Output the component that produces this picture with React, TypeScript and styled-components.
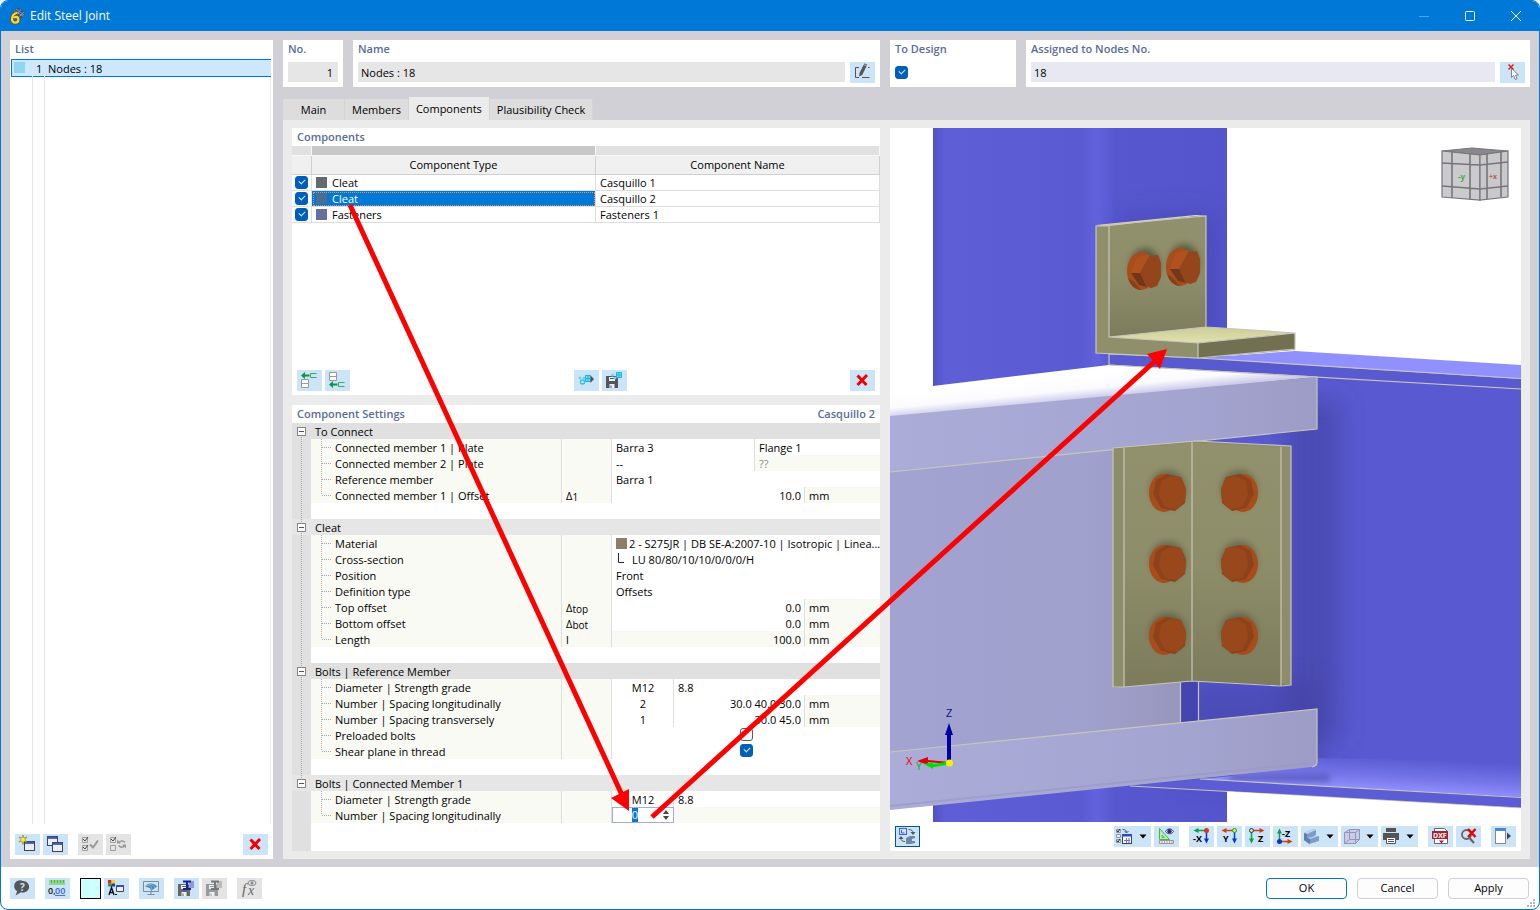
import React, { useEffect, useRef, useState } from "react";
import styled, { createGlobalStyle, css } from "styled-components";

const font = `"Open Sans", "Noto Sans", "Liberation Sans", sans-serif`;

const color = {
  accent: "#0078d7",
  frame: "#d1d0d6",
  page: "#ebebeb",
  heading: "#5b6c95",
  button: "#cce4f7",
  disabled: "#e4e4e4",
  field: "#e6e6e6",
  tint: "#f9faf4",
  group: "#e0e0e0",
  rule: "#dedede",
  check: "#005fb8",
};

const GlobalStyle = createGlobalStyle`
  *, *::before, *::after { box-sizing: border-box; }
  body { margin: 0; background: #f1f3f6; font-family: ${font}; font-size: 11px; line-height: 16px; color: #000; }
  button, input { font: inherit; color: inherit; }
  svg text { font-family: ${font}; }
`;

/* ---------- window frame ---------- */

const Window = styled.div`
  position: relative;
  display: flex;
  flex-direction: column;
  min-height: 100vh;
  border: 1px solid ${color.accent};
  border-radius: 8px;
  background: #fff;
  overflow: hidden;
`;

const TitleBar = styled.header`
  display: flex;
  align-items: center;
  height: 30px;
  padding-left: 8px;
  background: ${color.accent};
  color: #fff;
`;

const Title = styled.h1`
  flex: 1;
  margin: 0 0 0 5px;
  font-size: 12px;
  font-weight: 400;
`;

const CaptionButton = styled.button`
  display: flex;
  align-items: center;
  justify-content: center;
  width: 46px;
  height: 30px;
  padding: 0;
  border: 0;
  background: transparent;
  color: #fff;
  &:disabled { color: #4aa3ea; }
`;

const Workspace = styled.main`
  flex: 1;
  display: grid;
  grid-template-columns: 263px minmax(0, 1fr);
  gap: 10px;
  padding: 9px 9px 8px;
  background: ${color.frame};
`;

const Footer = styled.footer`
  display: flex;
  align-items: center;
  gap: 10px;
  height: 42px;
  padding: 0 10px 0 9px;
`;

/* ---------- shared parts ---------- */

const Panel = styled.section`
  display: flex;
  flex-direction: column;
  min-width: 0;
  background: #fff;
`;

const PanelHead = styled.div`
  display: flex;
  justify-content: space-between;
  padding: 0 5px;
  color: ${color.heading};
  font-weight: 600;
  line-height: 18px;
`;

const Heading = styled.h2`
  margin: 0;
  font-size: 11px;
  font-weight: 600;
`;

const FieldLabel = styled.label`
  color: ${color.heading};
  font-weight: 600;
  line-height: 18px;
`;

const FieldPanel = styled(Panel)`
  padding: 0 5px 4px;
`;

const FieldLine = styled.div`
  display: flex;
  align-items: flex-start;
  gap: 5px;
  margin-top: 4px;
  height: 21px;
`;

const TextField = styled.input<{ $tone?: string; $right?: boolean }>`
  flex: 1;
  min-width: 0;
  height: 20px;
  padding: 0 5px 0 3px;
  border: 0;
  outline: 0;
  background: ${(p) => p.$tone ?? color.field};
  text-align: ${(p) => (p.$right ? "right" : "left")};
`;

const ToolButton = styled.button<{ $split?: boolean; $active?: boolean }>`
  display: flex;
  flex: none;
  align-items: center;
  width: ${(p) => (p.$split ? 37 : 25)}px;
  height: 21px;
  padding: 0;
  border: 0;
  background: ${color.button};
  box-shadow: ${(p) => (p.$active ? "inset 0 0 0 1px #005499" : "none")};
  &:disabled { background: ${color.disabled}; }
`;

const Swatch = styled.button`
  width: 21px;
  height: 21px;
  margin-right: -7px;
  padding: 0;
  border: 1px solid #000;
  background: #ccffff;
`;

const ToolGroup = styled.div`
  display: flex;
  gap: 3px;
`;

const ToolRow = styled.div`
  display: flex;
  justify-content: space-between;
  gap: 10px;
  padding: 4px 5px;
`;

const Spacer = styled.div`
  flex: 1;
`;

const CheckBox = styled.input.attrs({ type: "checkbox" })`
  appearance: none;
  position: relative;
  display: block;
  flex: none;
  width: 13px;
  height: 13px;
  margin: 0;
  border: 1px solid #5a5a5a;
  border-radius: 3px;
  background: #f6f6f6;
  &:checked { border-color: ${color.check}; background: ${color.check}; }
  &:checked::after {
    content: "";
    position: absolute;
    left: 3px;
    top: 2px;
    width: 6px;
    height: 4px;
    border: solid #d8e8f8;
    border-width: 0 0 1px 1px;
    transform: rotate(-45deg);
  }
`;

const DialogButton = styled.button<{ $primary?: boolean }>`
  width: 81px;
  height: 21px;
  padding: 0;
  border: 1px solid ${(p) => (p.$primary ? color.accent : "#d0d0d0")};
  border-radius: 4px;
  background: #fdfdfd;
`;

const Col = styled.col<{ $width?: number }>`
  width: ${(p) => (p.$width ? `${p.$width}px` : "auto")};
`;

/* ---------- list ---------- */

const NodeList = styled.ul`
  flex: 1;
  display: grid;
  grid-template-rows: 18px 1fr;
  margin: 1px 2px 6px 1px;
  padding: 0;
  list-style: none;
`;

const NodeRow = styled.li<{ $selected?: boolean }>`
  display: grid;
  grid-template-columns: 21px 12px 1fr;
  ${(p) =>
    p.$selected
      ? css`
          background: #cce8ff;
          border: solid ${color.accent};
          border-width: 1px 0 1px 1px;
        `
      : css`
          border-left: 1px solid transparent;
          border-right: 1px solid #ebebeb;
        `}
`;

const NodeCell = styled.span<{ $edge?: boolean }>`
  padding-left: 3px;
  border-right: ${(p) => (p.$edge ? "1px solid #e4e4e4" : "0")};
  line-height: 18px;
`;

const ColorChip = styled.span<{ $fill: string; $gap?: number }>`
  display: inline-block;
  width: 11px;
  height: 11px;
  margin-right: ${(p) => p.$gap ?? 5}px;
  background: ${(p) => p.$fill};
  vertical-align: -1px;
`;

const RowChip = styled.i`
  display: block;
  width: 11px;
  height: 11px;
  margin: 2px 0 0 -1px;
  background: #8fd6f5;
`;

/* ---------- editor ---------- */

const Editor = styled.div`
  display: flex;
  flex-direction: column;
  min-width: 0;
`;

const FieldRow = styled.div`
  display: grid;
  grid-template-columns: minmax(0, 597fr) minmax(0, 640fr);
  gap: 10px;
`;

const FieldPair = styled.div<{ $first: number }>`
  display: grid;
  grid-template-columns: ${(p) => p.$first}px minmax(0, 1fr);
  gap: 10px;
`;

const TabList = styled.div`
  display: flex;
  align-items: flex-end;
  height: 23px;
  margin-top: 10px;
`;

const Tab = styled.button<{ $active?: boolean }>`
  min-width: 62px;
  height: ${(p) => (p.$active ? 23 : 21)}px;
  padding: 0 7px;
  border: 0;
  border-right: 1px solid #d4d4d4;
  background: ${(p) => (p.$active ? color.page : "#dddddd")};
  white-space: nowrap;
`;

const TabPage = styled.div`
  flex: 1;
  display: grid;
  grid-template-columns: minmax(0, 588fr) minmax(0, 631fr);
  gap: 10px;
  padding: 8px 9px;
  background: ${color.page};
`;

const Column = styled.div`
  display: flex;
  flex-direction: column;
  gap: 10px;
  min-width: 0;
`;

const ComponentsPanel = styled(Panel)`
  height: 267px;
`;

const SettingsPanel = styled(Panel)`
  flex: 1;
`;

const ComponentTable = styled.table`
  width: 100%;
  table-layout: fixed;
  border-collapse: separate;
  border-spacing: 0;
  td, th { padding: 0; font-weight: 400; }
`;

const StripCell = styled.td<{ $strong?: boolean }>`
  height: 10px;
  border-right: 1px solid #f7f7f7;
  border-bottom: 1px solid #f7f7f7;
  background: ${(p) => (p.$strong ? "#c8c8c8" : "#e1e1e1")};
`;

const HeadCell = styled.th`
  height: 19px;
  border-right: 1px solid #d0d0d0;
  border-bottom: 1px solid #d0d0d0;
  background: #f0f0f0;
`;

const BodyCell = styled.td<{ $selected?: boolean }>`
  height: 16px;
  border-right: 1px solid ${color.rule};
  border-bottom: 1px solid ${color.rule};
  line-height: 15px;
  ${(p) =>
    p.$selected &&
    css`
      background: ${color.accent};
      color: #fff;
      outline: 1px dotted #e8954a;
      outline-offset: -2px;
    `}
`;

const CellText = styled.div`
  padding-left: 4px;
`;

const CheckHolder = styled.div`
  padding-left: 3px;
`;

/* ---------- property grid ---------- */

const dots = (angle: string) =>
  `repeating-linear-gradient(${angle}, #a8a8a8 0 1px, transparent 1px 2px)`;

const PropertyTable = styled.table`
  width: 100%;
  table-layout: fixed;
  border-collapse: separate;
  border-spacing: 0;
  th, td {
    position: relative;
    height: 16px;
    padding: 2px 4px 0;
    font-weight: 400;
    text-align: left;
    line-height: 14px;
    white-space: nowrap;
    overflow: hidden;
  }
`;

const Gutter = styled.td<{ $line?: "all" | "top" | "bottom" | "none"; $light?: boolean }>`
  background: ${(p) => (p.$light ? "#e6e6e6" : color.group)};
  &::before {
    content: "";
    display: ${(p) => (p.$line === "none" ? "none" : "block")};
    position: absolute;
    left: 9px;
    top: ${(p) => (p.$line === "bottom" ? 8 : 0)}px;
    bottom: ${(p) => (p.$line === "top" ? 8 : 0)}px;
    width: 1px;
    background: ${dots("180deg")};
  }
`;

const Toggle = styled.button`
  position: absolute;
  left: 5px;
  top: 4px;
  width: 9px;
  height: 9px;
  padding: 0;
  border: 1px solid #848484;
  background: #fff;
  &::before {
    content: "";
    display: block;
    height: 1px;
    margin: 0 1px;
    background: #555;
  }
`;

const GroupCell = styled.th<{ $light?: boolean }>`
  background: ${(p) => (p.$light ? "#e6e6e6" : color.group)};
`;

const NameCell = styled.th<{ $last?: boolean }>`
  && { padding-left: 24px; }
  border-right: 1px solid ${color.rule};
  background: ${color.tint};
  &::before {
    content: "";
    position: absolute;
    left: 10px;
    top: 0;
    bottom: ${(p) => (p.$last ? 8 : 0)}px;
    width: 1px;
    background: ${dots("180deg")};
  }
  &::after {
    content: "";
    position: absolute;
    left: 11px;
    top: 8px;
    width: 10px;
    height: 1px;
    background: ${dots("90deg")};
  }
`;

const SymbolCell = styled.td`
  border-right: 1px solid ${color.rule};
  background: ${color.tint};
  sub { font-size: 10px; line-height: 8px; vertical-align: -1px; }
`;

const ValueCell = styled.td<{ $align?: string; $tint?: boolean; $edge?: boolean; $muted?: boolean }>`
  && { text-align: ${(p) => p.$align ?? "left"}; }
  && { padding-right: ${(p) => (p.$align ? 3 : 0)}px; }
  border-right: ${(p) => (p.$edge ? `1px solid ${color.rule}` : "0")};
  background: ${(p) => (p.$tint ? color.tint : "#fff")};
  color: ${(p) => (p.$muted ? "#8c8c8c" : "#000")};
`;

const FlagCell = styled.td`
  && { padding: 1px 0 0; vertical-align: top; }
`;

const CheckCenter = styled.div`
  display: flex;
  justify-content: center;
`;

const EditCell = styled.td`
  && { padding: 0; }
`;

const Spinner = styled.div`
  display: flex;
  align-items: center;
  height: 16px;
  padding-right: 4px;
  border: 1px solid #a6a6e8;
  background: #fff;
`;

const SpinnerInput = styled.input`
  flex: 1;
  width: 100%;
  min-width: 0;
  height: 14px;
  padding: 0 6px 0 0;
  border: 0;
  outline: 0;
  background: transparent;
  text-align: center;
  line-height: 14px;
  &::selection { background: ${color.accent}; color: #fff; }
`;

const SpinnerKeys = styled.div`
  display: grid;
  gap: 2px;
`;

const SpinnerKey = styled.button<{ $down?: boolean }>`
  width: 6px;
  height: 4px;
  padding: 0;
  border: 0;
  background: #444;
  clip-path: ${(p) =>
    p.$down ? "polygon(0 0, 100% 0, 50% 100%)" : "polygon(50% 0, 100% 100%, 0 100%)"};
`;

const GridFiller = styled.div`
  flex: 1;
  border-left: 19px solid ${color.group};
`;

/* ---------- viewer ---------- */

const Viewer = styled(Panel)`
  min-height: 723px;
`;

const ViewerToolGroups = styled.div`
  display: flex;
  gap: 10px;
`;

const Scene = styled.svg`
  display: block;
  flex: 1;
  width: 100%;
  min-height: 0;
`;

const Callouts = styled.svg`
  position: absolute;
  left: 0;
  top: 0;
  width: 1538px;
  height: 908px;
  pointer-events: none;
`;

const SizeGrip = styled.svg`
  position: absolute;
  right: 3px;
  bottom: 1px;
`;

/* ---------- icons, drawn on the 25 x 21 button face ---------- */

const Icon = ({ children }: { children: React.ReactNode }) => (
  <svg width="25" height="21" viewBox="0 0 25 21" aria-hidden="true">
    {children}
  </svg>
);

const Chevron = () => (
  <svg width="8" height="5" viewBox="0 0 8 5" aria-hidden="true">
    <path d="M0.5 0.5h7L4 4.5z" fill="#000" />
  </svg>
);

const AppIcon = () => (
  <svg width="16" height="18" viewBox="0 0 16 18" aria-hidden="true">
    <path d="M4 5 8 1l5 1 3 5-2 2-3 4-5-2z" fill="#34557f" />
    <path d="M5 4l9 5M7 2l8 6M12 2 7 9M15 5l-6 6" stroke="#8fa6bf" strokeWidth="0.8" />
    <path d="M8.500 5.500C5 6.500 3 9 3 12c0 2.500 1.400 3.700 3.200 3.700s3.200-1.400 3.200-3.200c0-1.600-1-2.700-2.500-2.700-1 0-1.700.6-2 1.300" fill="none" stroke="#6b5200" strokeWidth="3.400" />
    <path d="M8.500 5.500C5 6.500 3 9 3 12c0 2.500 1.400 3.700 3.200 3.700s3.200-1.400 3.200-3.200c0-1.600-1-2.700-2.500-2.700-1 0-1.700.6-2 1.300" fill="none" stroke="#ffd633" strokeWidth="2.200" />
  </svg>
);

const DeleteIcon = () => (
  <Icon>
    <path d="M7.500 5.500l9 9.500M17 5l-9.500 10" stroke="#f00000" strokeWidth="3" />
  </Icon>
);

const EditIcon = () => (
  <Icon>
    <path d="M9 5.500H5.500v10H9M12 15.500h7.500M18 5.500h1.500" fill="none" stroke="#555" />
    <path d="M13.500 3l3 1.200-4.300 8.800-3 1.500.3-3.400z" fill="#555" />
    <path d="M14 2l3 1.200" stroke="#777" strokeWidth="1.500" />
  </Icon>
);

const PickIcon = () => (
  <Icon>
    <path d="M8.500 2.500l5 5M13.500 2.500l-5 5" stroke="#e02020" strokeWidth="1.500" />
    <path d="M11.500 6.500v9l2.200-2 1.600 4 1.800-.8-1.600-3.700h3z" fill="#fff" stroke="#777" strokeWidth="0.900" />
  </Icon>
);

const MiniWindow = ({ x, y }: { x: number; y: number }) => (
  <g>
    <rect x={x} y={y} width="10" height="9" fill="#e9eef8" stroke="#444" />
    <rect x={x} y={y} width="10" height="2" fill="#3d5bd9" stroke="#444" strokeWidth="0.600" />
  </g>
);

const NewIcon = () => (
  <Icon>
    <MiniWindow x={9.5} y={7.5} />
    <path d="M8 1l1 3 3-1-2 2.500 2 2.500-3-.8L8 10.500 7 7.200 4 8l2-2.500L4 3l3 1z" fill="#f5ee3c" stroke="#8a8a20" strokeWidth="0.700" />
  </Icon>
);

const CopyIcon = () => (
  <Icon>
    <MiniWindow x={4.5} y={2.5} />
    <MiniWindow x={9.5} y={8.5} />
  </Icon>
);

const CheckAllIcon = () => (
  <Icon>
    <path d="M4.500 3.500h5v5h-5zM4.500 11.500h5v5h-5z" fill="none" stroke="#a0a0a0" />
    <path d="M5 5l2 2 3-4M5 13l2 2 3-4" fill="none" stroke="#444" />
    <path d="M12 10.500l3 3 5-7" fill="none" stroke="#999" strokeWidth="2" />
  </Icon>
);

const InvertIcon = () => (
  <Icon>
    <path d="M4.500 3.500h5v5h-5zM4.500 11.500h5v5h-5z" fill="none" stroke="#a0a0a0" />
    <path d="M5 5l2 2 3-4" fill="none" stroke="#444" />
    <path d="M12.500 8.500c2-2 5-2 6.500 0M19 11.500c-2 2-4.500 2-6.500 0" fill="none" stroke="#999" strokeWidth="1.500" />
    <path d="M11 5.500v4h4zM20 14.500v-4h-4z" fill="#999" />
  </Icon>
);

const MoveUpIcon = () => (
  <Icon>
    <path d="M4.500 9.500h7v8h-7zM4.500 13.500h7" fill="#fff" stroke="#999" />
    <path d="M4 5.500l4-3.500v2.500h4.500v2H8V9z" fill="#0a9648" />
    <path d="M19.500 3.500h-6v4h6" fill="none" stroke="#3aa868" />
  </Icon>
);

const MoveDownIcon = () => (
  <Icon>
    <path d="M4.500 2.500h7v8h-7zM4.500 6.500h7" fill="#fff" stroke="#999" />
    <path d="M4 14.500L8 11v2.500h4.500v2H8V18z" fill="#0a9648" />
    <path d="M19.500 12.500h-6v4h6" fill="none" stroke="#3aa868" />
  </Icon>
);

const LibraryIcon = () => (
  <Icon>
    <circle cx="6" cy="8" r="1.500" fill="#6fd0ee" />
    <circle cx="10" cy="8" r="1.500" fill="#6fd0ee" />
    <circle cx="8.500" cy="12" r="2" fill="none" stroke="#38bfe6" strokeWidth="1.400" />
    <path d="M11.500 5.500h5v6h-5zM11.500 8.500h5M14 5.500v6" fill="#7fd8f2" stroke="#18b4e4" />
    <path d="M16.500 5.500l3.500 3.500-3.500 4z" fill="#555" />
  </Icon>
);

const Floppy = ({ x, y, fill }: { x: number; y: number; fill: string }) => (
  <g transform={`translate(${x} ${y})`}>
    <path d="M0 0h10l2 2v10H0z" fill={fill} />
    <path d="M3 1h6v4H3zM3.500 8h5v4h-5z" fill="#e8f2fa" />
    <path d="M4 2.500h4M5 9.500v2.500" stroke={fill} strokeWidth="1" />
  </g>
);

const SaveLibraryIcon = () => (
  <Icon>
    <Floppy x={4} y={6} fill="#555" />
    <path d="M14.500 2.500h5v5h-5zM14.500 5h5M17 2.500v5" fill="#7fd8f2" stroke="#18b4e4" />
    <circle cx="10.500" cy="5" r="1.500" fill="#6fd0ee" />
    <circle cx="13" cy="8" r="1.500" fill="#6fd0ee" />
  </Icon>
);

const HelpIcon = () => (
  <Icon>
    <path d="M13 3a6 5.800 0 1 1-2 11.200L5.500 17.500l1.700-4.300A6 5.800 0 0 1 13 3z" fill="#555" />
    <text x="10" y="13" fontSize="10" fontWeight="700" fill="#cce4f7">?</text>
  </Icon>
);

const UnitsIcon = () => (
  <Icon>
    <path d="M4 2h16v5H4z" fill="#8fd98a" />
    <path d="M6.500 2v3M9.500 2v3M12.500 2v3M15.500 2v3M18.500 2v3" stroke="#4a9a48" strokeWidth="0.800" />
    <text x="3" y="16" fontSize="9" fontWeight="600" fill="#111">0,</text>
    <text x="10" y="16" fontSize="9" fontWeight="600" fill="#3c62d8" textDecoration="underline">00</text>
  </Icon>
);

const DisplayIcon = () => (
  <Icon>
    <rect x="4" y="2" width="3.500" height="3.500" fill="#e02020" />
    <rect x="7.500" y="2" width="3.500" height="3.500" fill="#f2d800" />
    <rect x="4" y="5.500" width="3.500" height="3" fill="#20a030" />
    <rect x="7.500" y="5.500" width="3.500" height="3" fill="#2030d0" />
    <path d="M5 17l2.500-7.500L10 17M6 14.500h3" fill="none" stroke="#111" strokeWidth="1.400" />
    <path d="M4 17.500h16" stroke="#111" strokeDasharray="2 1" strokeWidth="0" />
    <path d="M12.500 7.500h7v6h-7z" fill="#e9eef8" stroke="#444" />
    <path d="M12 7h8v2h-8z" fill="#3d4fc0" />
    <path d="M11 16.500h2" stroke="#111" />
  </Icon>
);

const MonitorIcon = () => (
  <Icon>
    <path d="M4.500 3.500h15v10h-15zM12 13.500v3M8.500 16.500h7" fill="none" stroke="#7a8ca0" />
    <path d="M6 8.500c3-4 9-4 12 0l-6 4.500-1-3z" fill="#4d7fb0" />
    <path d="M7 8c3-1.500 6 0 6 4M10 6c3 0 5 1.500 5.500 4" stroke="#a9c8e4" strokeWidth="0.800" fill="none" />
  </Icon>
);

const SaveSectionIcon = ({ muted }: { muted?: boolean }) => (
  <Icon>
    <Floppy x={4} y={6} fill={muted ? "#999" : "#666"} />
    <path d="M15 3h5v7h-5z" fill={muted ? "#bbb" : "#8c98f0"} />
    <path d="M9 3.500h8M13 3.500v7M9 11h8" stroke={muted ? "#777" : "#141f9c"} strokeWidth="2" />
  </Icon>
);

const Formula = styled.text`
  && { font-family: "Liberation Serif", serif; }
  font-style: italic;
`;

const FormulaIcon = () => (
  <Icon>
    <Formula x="5" y="16" fontSize="15" fill="#666">f</Formula>
    <Formula x="11" y="17" fontSize="14" fill="#666">x</Formula>
    <ellipse cx="15" cy="5" rx="4" ry="2.500" fill="none" stroke="#888" />
    <circle cx="15" cy="5" r="1.500" fill="#888" />
  </Icon>
);

const SwapViewIcon = () => (
  <Icon>
    <rect x="4.500" y="2.500" width="7" height="6" fill="#d7e4ff" stroke="#3c5fe0" />
    <path d="M6.500 4v3h3" stroke="#3c5fe0" fill="none" />
    <path d="M13.500 3.500c3 0 4.500 1 4.500 4" fill="none" stroke="#555" />
    <path d="M15.500 6h5L18 9z" fill="#555" />
    <path d="M10 15.500c-3 0-4-1-4-3.500" fill="none" stroke="#555" />
    <path d="M3.500 13h5L6 10z" fill="#555" />
    <path d="M11 12l4-2h5v2l-3 1v2h3v2l-4 1h-5z" fill="#6e87a6" />
  </Icon>
);

const OptionsIcon = () => (
  <Icon>
    <path d="M2.500 3.500h4v3h-4zM2.500 8.500h4v3h-4zM2.500 13.500h4v3h-4z" fill="#e8eef4" stroke="#8a96a2" />
    <path d="M3 4.500l1 1.500 2-3M3 14.500l1 1.500 2-3" fill="none" stroke="#222" />
    <path d="M8.500 3.500c3 0 4 1 4 3M10.500 5l2 2 2-2" fill="none" stroke="#555" />
    <rect x="8.500" y="8.500" width="9" height="9" fill="#f4f6ff" stroke="#444" />
    <path d="M8 8h10v2.500H8z" fill="#2c49d8" />
    <path d="M10 14.500h6M12.500 12v5M15 12v5" stroke="#6a78b0" />
  </Icon>
);

const MeasureIcon = () => (
  <Icon>
    <path d="M5.500 2.500v11h10z" fill="#b6f0b0" stroke="#4caf50" />
    <path d="M8 9v2.500h2.500z" fill="#cce4f7" stroke="#4caf50" strokeWidth="0.800" />
    <path d="M5.500 14.500h14v3h-14z" fill="#eee" stroke="#999" />
    <path d="M8 15v2M10.500 15v2M13 15v2M15.500 15v2M18 15v2" stroke="#888" strokeWidth="0.700" />
    <path d="M11.500 5.500c2-3.500 6-3.500 8 0-2 3-6 3-8 0z" fill="#e8ecf8" stroke="#34407a" />
    <circle cx="15.500" cy="5.300" r="2.200" fill="#2a2f72" />
  </Icon>
);

const red = "#d43c10";
const green = "#08a048";
const blue = "#0a34c8";

const ArrowLine = ({ d, head, fill }: { d: string; head: string; fill: string }) => (
  <g>
    <path d={d} stroke={fill} strokeWidth="1.500" fill="none" />
    <path d={head} fill={fill} />
  </g>
);

const AxisLabel = ({ x, y, children }: { x: number; y: number; children: string }) => (
  <text x={x} y={y} fontSize="9" fontWeight="700" fill="#000">{children}</text>
);

const ViewMinusX = () => (
  <Icon>
    <ArrowLine d="M17 4.500H8" head="M4.500 4.500l5-2.500v5z" fill={green} />
    <ArrowLine d="M17.500 5v9" head="M17.500 17.500l-2.500-5h5z" fill={blue} />
    <circle cx="17.500" cy="4.500" r="2.500" fill={red} />
    <AxisLabel x={4} y={16}>-X</AxisLabel>
  </Icon>
);

const ViewY = () => (
  <Icon>
    <ArrowLine d="M17 4.500H8" head="M4.500 4.500l5-2.500v5z" fill={red} />
    <ArrowLine d="M17.500 5v9" head="M17.500 17.500l-2.500-5h5z" fill={blue} />
    <circle cx="17.500" cy="4.500" r="2" fill="#f0e83c" stroke={green} />
    <AxisLabel x={6} y={16}>Y</AxisLabel>
  </Icon>
);

const ViewZ = () => (
  <Icon>
    <ArrowLine d="M7 4.500h9" head="M19.500 4.500l-5-2.500v5z" fill={red} />
    <ArrowLine d="M6.500 5v9" head="M6.500 17.500l-2.500-5h5z" fill={green} />
    <circle cx="6.500" cy="4.500" r="2" fill="#f0e83c" stroke={blue} />
    <AxisLabel x={13} y={16}>Z</AxisLabel>
  </Icon>
);

const ViewMinusZ = () => (
  <Icon>
    <ArrowLine d="M6.500 15V6" head="M6.500 2.500l-2.500 5h5z" fill={green} />
    <ArrowLine d="M7 15.500h9" head="M19.500 15.500l-5-2.500v5z" fill={red} />
    <circle cx="6.500" cy="15.500" r="2.500" fill={blue} />
    <AxisLabel x={9} y={11}>-Z</AxisLabel>
  </Icon>
);

const SolidIcon = () => (
  <Icon>
    <path d="M3 7l9-4 3 1v5l-4 2 7-1v5l-10 3-5-4z" fill="#7d9cc6" />
    <path d="M3 7l9-4 3 1-9 4z" fill="#c3d6ee" />
    <path d="M6 12l5-1 7-1-9 3z" fill="#b4cbe8" />
    <path d="M3 7l3 1v4l3 1v5l-6-4z" fill="#5f80ac" />
  </Icon>
);

const BoxIcon = () => (
  <Icon>
    <path d="M3.500 6.500l5-3h10v10l-4 4h-11z" fill="#c6cde6" stroke="#9a94b4" />
    <path d="M3.500 6.500h11v11M14.500 6.500l4-3M8.500 3.500v10h10M8.500 13.500l-5 4" fill="none" stroke="#9a94b4" />
  </Icon>
);

const PrintIcon = () => (
  <Icon>
    <path d="M5 2h10v4H5zM2 7h16v7H2z" fill="#555" />
    <path d="M5.500 11.500h9v6h-9z" fill="#fff" stroke="#555" />
    <path d="M7 13.500h6M7 15.500h6" stroke="#555" />
  </Icon>
);

const DxfIcon = () => (
  <Icon>
    <path d="M6.500 2.500h10l3 3v12h-13z" fill="#fff" stroke="#666" />
    <path d="M4 5h16v8H4z" fill="#b01c2c" />
    <text x="5" y="12" fontSize="7" fontWeight="700" fill="#fff">DXF</text>
    <path d="M11 14.500h5l-2.500 3z" fill="#b01c2c" />
  </Icon>
);

const FindOffIcon = () => (
  <Icon>
    <circle cx="10.500" cy="8.500" r="4.500" fill="none" stroke="#666" strokeWidth="1.800" />
    <path d="M13.500 12l4.500 5" stroke="#666" strokeWidth="2.200" />
    <path d="M12 3l7.500 8M19.500 3l-7.500 8" stroke="#f00000" strokeWidth="2.500" />
  </Icon>
);

const DockIcon = () => (
  <Icon>
    <rect x="4.500" y="2.500" width="10" height="15" fill="#fff" stroke="#888" />
    <path d="M4 2h11v3H4z" fill="#4a86e0" />
    <path d="M16 6.500l4 3.500-4 3.500z" fill="#444" />
  </Icon>
);

/* ---------- 3D scene ---------- */

const edge = { fill: "none", stroke: "#c6c6bc", strokeWidth: 1.2 } as const;

const Bolt = ({ x, y }: { x: number; y: number }) => (
  <g transform={`translate(${x} ${y})`}>
    <ellipse cx="1" cy="-5" rx="15" ry="18" fill="#000" opacity="0.350" filter="url(#soft)" />
    <ellipse cx="-3" cy="0" rx="14" ry="19" fill="#a94c1c" />
    <path d="M-3 19a14 19 0 0 1-13-12l6 4z" fill="#873f19" />
    <path d="M-13 2l6-16 11-3 3 3-8 16z" fill="#b0521e" />
    <path d="M-13 2h10l6 14-8-2z" fill="#70381a" />
    <path d="M-4 2l9-17 9-1 3 8v14l-4 9-6 2-5-2z" fill="#94451b" />
  </g>
);

const SideBolt = ({ x, y, flip }: { x: number; y: number; flip?: boolean }) => (
  <g transform={`translate(${x} ${y})${flip ? " scale(-1 1)" : ""}`}>
    <ellipse cx="0" cy="-4" rx="18" ry="19" fill="#000" opacity="0.250" filter="url(#soft)" />
    <ellipse cx="4" cy="0" rx="15" ry="19" fill="#a84c1c" />
    <path d="M-18-4l5-12 14-3 11 6 3 14-8 14-14 3-10-8z" fill="#8c421b" />
    <path d="M-18-4l5-12 10-1 10 5 2 14-6 12-12 2-8-8z" fill="#99481c" />
  </g>
);

const CubeIcon = () => (
  <g stroke="#77757a" strokeWidth="1.200">
    <path d="M1442 151l30-3 36 3-28 4z" fill="#8a888c" />
    <path d="M1442 151l38 4v45l-38-3z" fill="#cbcbcd" />
    <path d="M1480 155l28-4v46l-28 3z" fill="#c9c9cb" />
    <path d="M1442 163l38 2 28-3M1442 186l38 3 28-3M1452 152v46M1470 154v45M1487 154v45M1501 152v45" fill="none" strokeWidth="1.600" />
    <text x="1458" y="180" fontSize="8" fontWeight="700" fill="#4aa850" stroke="none">-y</text>
    <text x="1489" y="179" fontSize="7" fontWeight="700" fill="#c05858" stroke="none">+x</text>
  </g>
);

const JointScene = () => (
  <Scene viewBox="890 128 631 694" preserveAspectRatio="xMinYMin slice" role="img" aria-label="Steel joint model">
    <defs>
      <filter id="soft" x="-50%" y="-50%" width="200%" height="200%">
        <feGaussianBlur stdDeviation="3" />
      </filter>
      <filter id="softer" x="-50%" y="-50%" width="200%" height="200%">
        <feGaussianBlur stdDeviation="12" />
      </filter>
      <linearGradient id="post" x1="0" x2="1" y1="0" y2="0">
        <stop offset="0" stopColor="#5252c2" />
        <stop offset="0.040" stopColor="#5e5ed6" />
        <stop offset="0.500" stopColor="#5a5ad2" />
        <stop offset="0.560" stopColor="#6262dd" />
        <stop offset="0.620" stopColor="#5757cf" />
        <stop offset="1" stopColor="#5454cc" />
      </linearGradient>
      <linearGradient id="web" x1="0" x2="1" y1="0" y2="0">
        <stop offset="0" stopColor="#a3a3d2" />
        <stop offset="0.700" stopColor="#a0a0cc" />
        <stop offset="1" stopColor="#9797bd" />
      </linearGradient>
      <linearGradient id="flange" x1="0" x2="1" y1="0" y2="0">
        <stop offset="0" stopColor="#acacd8" />
        <stop offset="0.700" stopColor="#a4a4d0" />
        <stop offset="1" stopColor="#9c9cc6" />
      </linearGradient>
      <linearGradient id="topFace" gradientUnits="userSpaceOnUse" x1="1080" y1="374" x2="1083" y2="404">
        <stop offset="0" stopColor="#fff" />
        <stop offset="0.500" stopColor="#fbfbff" />
        <stop offset="1" stopColor="#b4b4e0" />
      </linearGradient>
      <linearGradient id="plate" x1="0" x2="0" y1="0" y2="1">
        <stop offset="0" stopColor="#91916d" />
        <stop offset="0.500" stopColor="#8d8d69" />
        <stop offset="1" stopColor="#7c7c5d" />
      </linearGradient>
      <linearGradient id="shelf" x1="0" x2="0" y1="1" y2="0">
        <stop offset="0" stopColor="#e2e2ae" />
        <stop offset="1" stopColor="#cccc98" />
      </linearGradient>
      <linearGradient id="sole" gradientUnits="userSpaceOnUse" x1="1420" y1="758" x2="1418" y2="793">
        <stop offset="0" stopColor="#5858d0" />
        <stop offset="0.600" stopColor="#7676ea" />
        <stop offset="1" stopColor="#9292ff" />
      </linearGradient>
    </defs>
    <rect x="890" y="128" width="631" height="694" fill="#fff" />

    {/* column */}
    <path d="M933 128h294v694H933z" fill="url(#post)" />
    <path d="M1120 215h95v135h-95z" fill="#3c3ca0" opacity="0.350" filter="url(#softer)" />
    <path d="M1227 190h60v150h-60z" fill="#fff" />

    {/* right-hand beam */}
    <path d="M1109 364L1521 389V797L1200 779H1109z" fill="#5959d1" />
    <path d="M1285 400h55v340h-55z" fill="#4343a0" opacity="0.600" filter="url(#softer)" />
    <path d="M1181 680h140v100h-140z" fill="#3d3d9c" opacity="0.450" filter="url(#softer)" />
    <path d="M1198 358L1295 351 1521 365V379z" fill="#9090ff" />
    <path d="M1109 354L1198 358 1521 379V389L1109 365z" fill="#5a5ad0" />
    <path d="M1109 365V354L1198 358 1521 378.500M1109 365L1521 389" {...edge} />
    <path d="M1230 776L1317 758 1521 762V797L1200 779z" fill="url(#sole)" />
    <path d="M1230 774h100v8h-100z" fill="#3d3d9c" opacity="0.500" filter="url(#soft)" />
    <path d="M1200 779L1521 797V808L1130 786z" fill="#5c5cd4" />
    <path d="M1200 779L1521 797.500M1130 786L1521 808" {...edge} />
    <path d="M1227 791.500L1521 808.500V822H1227z" fill="#fff" />

    {/* left-hand beam */}
    <path d="M890 390L933 386 1109 365 1317 377 890 419z" fill="url(#topFace)" />
    <path d="M890 440h290V726L890 753z" fill="url(#web)" />
    <path d="M1181 660h17v68h-17z" fill="#4545b0" />
    <path d="M1180.500 660v66M1198.500 660v64" {...edge} />
    <path d="M890 416L1317 377V429L890 472z" fill="url(#flange)" />
    <path d="M1109 365L1317 377V429L890 472" {...edge} />
    <path d="M890 752L1317 709V762q0 4-5 5L890 810z" fill="url(#flange)" />
    <path d="M890 752L1317 709V762q0 4-5 5" {...edge} />
    <path d="M890 806L1312 763" stroke="#9a9ac8" strokeWidth="2" opacity="0.700" />

    {/* upright cleat */}
    <path d="M1113 448L1196 441 1291 446V685L1192 681 1113 688z" fill="#8d8d69" />
    <path d="M1124 449L1192 443V681L1124 687z" fill="url(#plate)" />
    <path d="M1192 443L1281 448V685L1192 681z" fill="url(#plate)" />
    <path d="M1113 448L1196 441 1291 446V685L1281 686 1192 681 1124 687 1113 687zM1124 448V687M1192 442V681M1281 447V686" {...edge} />
    {[493, 564, 636].map((y) => (
      <g key={y}>
        <SideBolt x={1168} y={y} flip />
        <SideBolt x={1239} y={y} />
      </g>
    ))}

    {/* seat cleat */}
    <path d="M1096 226L1206 216V330L1295 334V350L1198 358 1096 353z" fill="#8f8f6c" />
    <path d="M1109 227L1206 217V328L1109 338z" fill="url(#plate)" />
    <path d="M1096 225L1195 215H1206L1109 226z" fill="#d8d8a8" />
    <path d="M1109 337L1206 327 1295 333 1198 343z" fill="url(#shelf)" />
    <path d="M1198 343L1295 333V349L1198 358z" fill="#717152" />
    <path d="M1109 226H1096V353L1198 358 1295 349V333L1206 327V216L1096 226M1109 226V337L1198 343V358M1198 343L1295 333M1109 337L1206 327" {...edge} />
    <Bolt x={1144} y={271} />
    <Bolt x={1183} y={267} />

    <CubeIcon />

    {/* axes */}
    <path d="M949 763V734" stroke="#0000a0" strokeWidth="4" />
    <path d="M949 723l4 12h-8z" fill="#0000a0" />
    <path d="M949 763L928 761" stroke="#e00000" strokeWidth="2" />
    <path d="M917 761l11-4v8z" fill="#e00000" />
    <path d="M949 763L931 766" stroke="#00e000" strokeWidth="3" />
    <path d="M924 764l9-2v7z" fill="#00e000" />
    <circle cx="949.500" cy="763" r="3.500" fill="#f4f400" />
    <text x="946" y="717" fontSize="11" fill="#10108c">Z</text>
    <text x="906" y="765" fontSize="11" fill="#f00000">X</text>
    <text x="916" y="770" fontSize="10" fill="#00b400">Y</text>
  </Scene>
);

/* ---------- data ---------- */

type Row = { name: string; symbol?: React.ReactNode; cells: React.ReactNode };

const delta = (sub: string) => (
  <>
    Δ<sub>{sub}</sub>
  </>
);

const Whole = ({ children }: { children: React.ReactNode }) => <ValueCell colSpan={4}>{children}</ValueCell>;

const Measure = ({ value, tint }: { value: string; tint?: boolean }) => (
  <>
    <ValueCell colSpan={3} $align="right" $edge $tint={tint}>{value}</ValueCell>
    <ValueCell $tint>mm</ValueCell>
  </>
);

const Spacing = ({ count, value }: { count: string; value: string }) => (
  <>
    <ValueCell $align="center" $edge>{count}</ValueCell>
    <ValueCell colSpan={2} $align="right" $edge>{value}</ValueCell>
    <ValueCell $tint>mm</ValueCell>
  </>
);

const Grade = () => (
  <>
    <ValueCell $align="center" $edge>M12</ValueCell>
    <ValueCell colSpan={3}>8.8</ValueCell>
  </>
);

const Flag = ({ label, initial }: { label: string; initial?: boolean }) => (
  <FlagCell colSpan={4}>
    <CheckCenter>
      <CheckBox aria-label={label} defaultChecked={initial} />
    </CheckCenter>
  </FlagCell>
);

const CountEditor = () => {
  const field = useRef<HTMLInputElement>(null);
  const [value, setValue] = useState("0");
  useEffect(() => field.current?.select(), []);
  const step = (by: number) => setValue(String(Math.max(0, Number(value) + by)));
  return (
    <>
      <EditCell>
        <Spinner>
          <SpinnerInput
            ref={field}
            aria-label="Number of bolts longitudinally"
            value={value}
            onChange={(e) => setValue(e.target.value)}
          />
          <SpinnerKeys>
            <SpinnerKey aria-label="Increase" onClick={() => step(1)} />
            <SpinnerKey $down aria-label="Decrease" onClick={() => step(-1)} />
          </SpinnerKeys>
        </Spinner>
      </EditCell>
      <ValueCell colSpan={3} $tint />
    </>
  );
};

const groups: { title: string; rows: Row[] }[] = [
  {
    title: "To Connect",
    rows: [
      {
        name: "Connected member 1 | Plate",
        cells: (
          <>
            <ValueCell colSpan={2} $edge>Barra 3</ValueCell>
            <ValueCell colSpan={2}>Flange 1</ValueCell>
          </>
        ),
      },
      {
        name: "Connected member 2 | Plate",
        cells: (
          <>
            <ValueCell colSpan={2} $edge>--</ValueCell>
            <ValueCell colSpan={2} $tint $muted>??</ValueCell>
          </>
        ),
      },
      { name: "Reference member", cells: <Whole>Barra 1</Whole> },
      { name: "Connected member 1 | Offset", symbol: delta("1"), cells: <Measure value="10.0" /> },
    ],
  },
  {
    title: "Cleat",
    rows: [
      {
        name: "Material",
        cells: (
          <Whole>
            <ColorChip $fill="#8f7d69" $gap={2} />
            2 - S275JR | DB SE-A:2007-10 | Isotropic | Linea...
          </Whole>
        ),
      },
      {
        name: "Cross-section",
        cells: (
          <Whole>
            <svg width="16" height="11" viewBox="0 0 16 11" aria-hidden="true">
              <path d="M2.500 0v9.500H8" fill="none" stroke="#1c1c8c" />
            </svg>
            LU 80/80/10/10/0/0/0/H
          </Whole>
        ),
      },
      { name: "Position", cells: <Whole>Front</Whole> },
      { name: "Definition type", cells: <Whole>Offsets</Whole> },
      { name: "Top offset", symbol: delta("top"), cells: <Measure value="0.0" /> },
      { name: "Bottom offset", symbol: delta("bot"), cells: <Measure value="0.0" /> },
      { name: "Length", symbol: "l", cells: <Measure value="100.0" tint /> },
    ],
  },
  {
    title: "Bolts | Reference Member",
    rows: [
      { name: "Diameter | Strength grade", cells: <Grade /> },
      { name: "Number | Spacing longitudinally", cells: <Spacing count="2" value="30.0 40.0 30.0" /> },
      { name: "Number | Spacing transversely", cells: <Spacing count="1" value="30.0 45.0" /> },
      { name: "Preloaded bolts", cells: <Flag label="Preloaded bolts" /> },
      { name: "Shear plane in thread", cells: <Flag label="Shear plane in thread" initial /> },
    ],
  },
  {
    title: "Bolts | Connected Member 1",
    rows: [
      { name: "Diameter | Strength grade", cells: <Grade /> },
      { name: "Number | Spacing longitudinally", cells: <CountEditor /> },
    ],
  },
];

const components = [
  { type: "Cleat", name: "Casquillo 1", fill: "#666a70" },
  { type: "Cleat", name: "Casquillo 2", fill: "#476f96", selected: true },
  { type: "Fasteners", name: "Fasteners 1", fill: "#6a6e9c" },
];

/* ---------- sections ---------- */

const ListPanel = () => (
  <Panel>
    <PanelHead>
      <Heading>List</Heading>
    </PanelHead>
    <NodeList>
      <NodeRow $selected>
        <NodeCell $edge><RowChip /></NodeCell>
        <NodeCell $edge>1</NodeCell>
        <NodeCell>Nodes : 18</NodeCell>
      </NodeRow>
      <NodeRow aria-hidden="true">
        <NodeCell $edge />
        <NodeCell $edge />
        <NodeCell />
      </NodeRow>
    </NodeList>
    <ToolRow>
      <ToolGroup>
        <ToolButton aria-label="New"><NewIcon /></ToolButton>
        <ToolButton aria-label="Copy"><CopyIcon /></ToolButton>
      </ToolGroup>
      <ToolGroup>
        <ToolButton disabled aria-label="Select all"><CheckAllIcon /></ToolButton>
        <ToolButton disabled aria-label="Invert selection"><InvertIcon /></ToolButton>
      </ToolGroup>
      <Spacer />
      <ToolButton aria-label="Delete"><DeleteIcon /></ToolButton>
    </ToolRow>
  </Panel>
);

const ComponentList = () => (
  <ComponentsPanel>
    <PanelHead>
      <Heading>Components</Heading>
    </PanelHead>
    <ComponentTable>
      <colgroup>
        <Col $width={20} />
        <Col />
        <Col />
      </colgroup>
      <thead>
        <tr aria-hidden="true">
          <StripCell />
          <StripCell $strong />
          <StripCell />
        </tr>
        <tr>
          <HeadCell aria-label="Active" />
          <HeadCell>Component Type</HeadCell>
          <HeadCell>Component Name</HeadCell>
        </tr>
      </thead>
      <tbody>
        {components.map((c) => (
          <tr key={c.name}>
            <BodyCell>
              <CheckHolder>
                <CheckBox defaultChecked aria-label={c.name} />
              </CheckHolder>
            </BodyCell>
            <BodyCell $selected={c.selected}>
              <CellText>
                <ColorChip $fill={c.fill} />
                {c.type}
              </CellText>
            </BodyCell>
            <BodyCell>
              <CellText>{c.name}</CellText>
            </BodyCell>
          </tr>
        ))}
      </tbody>
    </ComponentTable>
    <Spacer />
    <ToolRow>
      <ToolGroup>
        <ToolButton aria-label="Insert before"><MoveUpIcon /></ToolButton>
        <ToolButton aria-label="Insert after"><MoveDownIcon /></ToolButton>
      </ToolGroup>
      <ToolGroup>
        <ToolButton aria-label="Load from library"><LibraryIcon /></ToolButton>
        <ToolButton aria-label="Save to library"><SaveLibraryIcon /></ToolButton>
      </ToolGroup>
      <ToolButton aria-label="Delete component"><DeleteIcon /></ToolButton>
    </ToolRow>
  </ComponentsPanel>
);

const Settings = () => (
  <SettingsPanel>
    <PanelHead>
      <Heading>Component Settings</Heading>
      <span>Casquillo 2</span>
    </PanelHead>
    <PropertyTable>
      <colgroup>
        <Col $width={19} />
        <Col $width={251} />
        <Col $width={50} />
        <Col $width={62} />
        <Col />
        <Col $width={50} />
        <Col $width={75} />
      </colgroup>
      {groups.map((group, g) => {
        const light = g % 2 === 1;
        const last = g === groups.length - 1;
        return (
          <tbody key={group.title}>
            <tr>
              <Gutter $light={light} $line={g === 0 ? "bottom" : last ? "top" : "all"}>
                <Toggle aria-label={`Collapse ${group.title}`} />
              </Gutter>
              <GroupCell colSpan={6} $light={light}>{group.title}</GroupCell>
            </tr>
            {group.rows.map((row, r) => (
              <tr key={row.name}>
                <Gutter $line={last ? "none" : "all"} />
                <NameCell scope="row" $last={r === group.rows.length - 1}>{row.name}</NameCell>
                <SymbolCell>{row.symbol}</SymbolCell>
                {row.cells}
              </tr>
            ))}
            {!last && (
              <tr>
                <Gutter $line="all" />
                <td colSpan={6} />
              </tr>
            )}
          </tbody>
        );
      })}
    </PropertyTable>
    <GridFiller />
  </SettingsPanel>
);

const ViewerPanel = () => (
  <Viewer>
    <JointScene />
    <ToolRow>
      <ToolButton $active aria-label="Switch view"><SwapViewIcon /></ToolButton>
      <ViewerToolGroups>
        <ToolGroup>
          <ToolButton $split aria-label="Display options"><OptionsIcon /><Chevron /></ToolButton>
          <ToolButton aria-label="Measure"><MeasureIcon /></ToolButton>
        </ToolGroup>
        <ToolGroup>
          <ToolButton aria-label="View against X"><ViewMinusX /></ToolButton>
          <ToolButton aria-label="View along Y"><ViewY /></ToolButton>
          <ToolButton aria-label="View along Z"><ViewZ /></ToolButton>
          <ToolButton aria-label="View against Z"><ViewMinusZ /></ToolButton>
          <ToolButton $split aria-label="Rendering"><SolidIcon /><Chevron /></ToolButton>
          <ToolButton $split aria-label="Projection"><BoxIcon /><Chevron /></ToolButton>
          <ToolButton $split aria-label="Print"><PrintIcon /><Chevron /></ToolButton>
        </ToolGroup>
        <ToolGroup>
          <ToolButton aria-label="Export DXF"><DxfIcon /></ToolButton>
          <ToolButton aria-label="Reset view"><FindOffIcon /></ToolButton>
        </ToolGroup>
        <ToolButton aria-label="Detach view"><DockIcon /></ToolButton>
      </ViewerToolGroups>
    </ToolRow>
  </Viewer>
);

const CheckBoxDrop = styled.div`
  padding-top: 4px;
`;

const Fields = () => (
  <FieldRow>
    <FieldPair $first={60}>
      <FieldPanel>
        <FieldLabel htmlFor="no">No.</FieldLabel>
        <FieldLine><TextField id="no" defaultValue="1" readOnly $right /></FieldLine>
      </FieldPanel>
      <FieldPanel>
        <FieldLabel htmlFor="name">Name</FieldLabel>
        <FieldLine>
          <TextField id="name" defaultValue="Nodes : 18" readOnly />
          <ToolButton aria-label="Edit name"><EditIcon /></ToolButton>
        </FieldLine>
      </FieldPanel>
    </FieldPair>
    <FieldPair $first={126}>
      <FieldPanel>
        <FieldLabel htmlFor="design">To Design</FieldLabel>
        <FieldLine><CheckBoxDrop><CheckBox id="design" defaultChecked /></CheckBoxDrop></FieldLine>
      </FieldPanel>
      <FieldPanel>
        <FieldLabel htmlFor="nodes">Assigned to Nodes No.</FieldLabel>
        <FieldLine>
          <TextField id="nodes" defaultValue="18" $tone="#e8e8f2" />
          <ToolButton aria-label="Pick nodes"><PickIcon /></ToolButton>
        </FieldLine>
      </FieldPanel>
    </FieldPair>
  </FieldRow>
);

const tabs = ["Main", "Members", "Components", "Plausibility Check"];

export default function App() {
  return (
    <>
      <GlobalStyle />
      <Window>
        <TitleBar>
          <AppIcon />
          <Title>Edit Steel Joint</Title>
          <CaptionButton disabled aria-label="Minimize">
            <svg width="10" height="10" viewBox="0 0 10 10"><path d="M0 5.500h10" stroke="currentColor" /></svg>
          </CaptionButton>
          <CaptionButton aria-label="Maximize">
            <svg width="10" height="10" viewBox="0 0 10 10"><rect x="0.500" y="0.500" width="9" height="9" rx="1" fill="none" stroke="currentColor" /></svg>
          </CaptionButton>
          <CaptionButton aria-label="Close">
            <svg width="10" height="10" viewBox="0 0 10 10"><path d="M0 0l10 10M10 0L0 10" stroke="currentColor" /></svg>
          </CaptionButton>
        </TitleBar>
        <Workspace>
          <ListPanel />
          <Editor>
            <Fields />
            <TabList role="tablist">
              {tabs.map((tab) => (
                <Tab key={tab} role="tab" aria-selected={tab === "Components"} $active={tab === "Components"}>
                  {tab}
                </Tab>
              ))}
            </TabList>
            <TabPage role="tabpanel">
              <Column>
                <ComponentList />
                <Settings />
              </Column>
              <ViewerPanel />
            </TabPage>
          </Editor>
        </Workspace>
        <Footer>
          <ToolButton aria-label="Help"><HelpIcon /></ToolButton>
          <ToolButton aria-label="Units"><UnitsIcon /></ToolButton>
          <Swatch aria-label="Color" />
          <ToolButton aria-label="Display properties"><DisplayIcon /></ToolButton>
          <ToolButton aria-label="Visibility"><MonitorIcon /></ToolButton>
          <ToolGroup>
            <ToolButton aria-label="Save section"><SaveSectionIcon /></ToolButton>
            <ToolButton disabled aria-label="Load section"><SaveSectionIcon muted /></ToolButton>
          </ToolGroup>
          <ToolButton disabled aria-label="Formula"><FormulaIcon /></ToolButton>
          <Spacer />
          <DialogButton $primary>OK</DialogButton>
          <DialogButton>Cancel</DialogButton>
          <DialogButton>Apply</DialogButton>
        </Footer>
        <Callouts viewBox="1 1 1538 908" aria-hidden="true">
          <path d="M350 205L622 795M652 817L1154 362" stroke="#f00" strokeWidth="5" />
          <path d="M629 811L611 798 629 789zM1167 349L1160 369 1147 354z" fill="#f00" />
        </Callouts>
        <SizeGrip width="9" height="9" viewBox="0 0 9 9" aria-hidden="true">
          <path d="M6 0h2v2H6zM3 3h2v2H3zM6 3h2v2H6zM0 6h2v2H0zM3 6h2v2H3zM6 6h2v2H6z" fill="#b8b8b8" />
        </SizeGrip>
      </Window>
    </>
  );
}
